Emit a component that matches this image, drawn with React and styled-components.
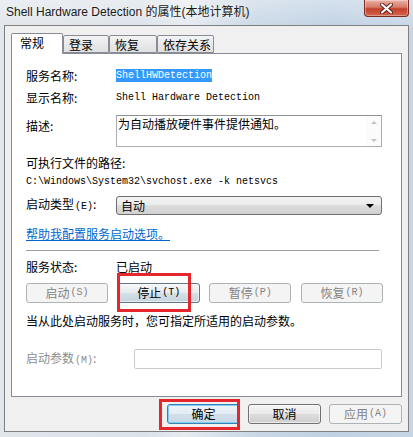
import React from 'react';
import styled, { createGlobalStyle } from 'styled-components';

const GlobalStyle = createGlobalStyle`
  html, body {
    margin: 0;
    padding: 0;
  }
  body {
    width: 413px;
    height: 437px;
    overflow: hidden;
    font-family: "Noto Sans CJK SC", sans-serif;
  }
`;

const Window = styled.div`
  width: 413px;
  height: 437px;
  display: flex;
  flex-direction: column;
  background:
    linear-gradient(180deg, rgba(255,255,255,0.35), rgba(255,255,255,0) 30px),
    linear-gradient(90deg, #e1e6eb 0%, #dbe2ea 35%, #e6ebf0 45%, #cbd8e6 60%, #bfd1e4 80%, #c7d6e6 100%);
`;

const TitleBar = styled.div`
  height: 25px;
  display: flex;
  align-items: flex-start;
  padding-left: 6px;
`;

const Title = styled.div`
  margin-top: 5px;
  font: 12px/15px "Liberation Sans", "Noto Sans CJK SC", sans-serif;
  color: #1a1a1a;
  text-shadow: 0 0 6px rgba(255,255,255,0.9);
`;

const CloseButton = styled.div`
  margin-left: auto;
  margin-right: 4px;
  width: 45px;
  height: 17px;
  box-sizing: border-box;
  border: 1px solid #7a2b22;
  border-top: none;
  border-radius: 0 0 4px 4px;
  background: linear-gradient(#eab2a6, #d77a68 45%, #c2412f 55%, #d4654a);
  box-shadow: inset 0 0 0 1px rgba(255,255,255,0.35);
  display: flex;
  align-items: center;
  justify-content: center;
`;

const Client = styled.div`
  margin: 0 4px;
  height: 407px;
  box-sizing: border-box;
  border: 1px solid #7f7f7f;
  background: #f0f0f0;
  padding: 7px 6px 0 6px;
  display: flex;
  flex-direction: column;
`;

const TabStrip = styled.div`
  height: 20px;
  display: flex;
  align-items: flex-end;
  position: relative;
  z-index: 1;
`;

const Tab = styled.div`
  width: ${p => p.$w}px;
  height: ${p => (p.$active ? 21 : 18)}px;
  margin-bottom: ${p => (p.$active ? -1 : 0)}px;
  box-sizing: border-box;
  border: 1px solid #898c95;
  border-bottom: ${p => (p.$active ? 'none' : '1px solid #898c95')};
  border-radius: 2px 2px 0 0;
  background: ${p => (p.$active ? '#ffffff' : 'linear-gradient(#f4f4f4, #e9e9e9 50%, #e0e0e0)')};
  padding: ${p => (p.$active ? '1px 0 0 8px' : '1px 0 0 5px')};
  font-size: 12px;
  line-height: 15px;
  color: #000;
`;

const Panel = styled.div`
  width: 391px;
  height: 344px;
  box-sizing: border-box;
  border: 1px solid #898c95;
  background: #ffffff;
  padding: 14px 18px 0 14px;
  display: flex;
  flex-direction: column;
`;

const Row = styled.div`
  display: flex;
  align-items: ${p => p.$align || 'center'};
  height: ${p => p.$h}px;
  margin-top: ${p => p.$mt || 0}px;
`;

const Label = styled.div`
  width: ${p => p.$w || 90}px;
  flex: none;
  font-size: 12px;
  line-height: 14px;
  color: ${p => (p.$disabled ? '#8d8d8d' : '#000')};
  padding-top: ${p => p.$pt || 0}px;
`;

const Text = styled.div`
  font-size: 12px;
  line-height: 14px;
  color: #000;
  white-space: nowrap;
`;

const Mono = styled.span`
  font-family: "Liberation Mono", "DejaVu Sans Mono", monospace;
  font-size: 10px;
  line-height: 13px;
  color: #000;
  white-space: pre;
`;

const Selected = styled(Mono)`
  background: #3399ff;
  color: #fff;
  display: inline-block;
`;

const TextArea = styled.div`
  width: 266px;
  height: 32px;
  box-sizing: border-box;
  border: 1px solid #abadb3;
  border-top-color: #8e9196;
  display: flex;
`;

const TextAreaBody = styled.div`
  flex: 1;
  font-size: 12px;
  line-height: 14px;
  padding: 1px 0 0 1px;
`;

const ScrollBar = styled.div`
  width: 15px;
  display: flex;
  flex-direction: column;
  justify-content: space-between;
  align-items: center;
  padding: 5px 0 4px;
  background: #fbfbfb;
`;

const Arrow = styled.div`
  width: 0;
  height: 0;
  border-left: 3px solid transparent;
  border-right: 3px solid transparent;
  ${p => (p.$up ? 'border-bottom: 3px solid #c2c2c2;' : 'border-top: 3px solid #c2c2c2;')}
`;

const Combo = styled.div`
  width: 266px;
  height: 19px;
  box-sizing: border-box;
  border: 1px solid #707070;
  border-radius: 3px;
  background: linear-gradient(#f3f3f3, #ebebeb 50%, #dddddd 50%, #d1d1d1);
  display: flex;
  align-items: center;
  padding: 0 4px;
  font-size: 12px;
  line-height: 14px;
`;

const ComboArrow = styled.div`
  margin-left: auto;
  margin-right: 3px;
  width: 0;
  height: 0;
  border-left: 4px solid transparent;
  border-right: 4px solid transparent;
  border-top: 4px solid #000;
`;

const Link = styled.a`
  font-size: 12px;
  line-height: 14px;
  color: #0066cc;
  text-decoration: underline;
`;

const Separator = styled.div`
  width: 353px;
  height: 1px;
  margin-top: 9px;
  background: #a0a0a0;
`;

const ButtonRow = styled.div`
  display: flex;
  justify-content: space-between;
  margin-top: ${p => p.$mt || 0}px;
`;

const ButtonWrap = styled.div`
  position: relative;
  flex: none;
`;

const Button = styled.div`
  width: ${p => p.$w || 82}px;
  height: 20px;
  box-sizing: border-box;
  border-radius: 3px;
  display: flex;
  align-items: center;
  justify-content: center;
  font-size: 12px;
  line-height: 14px;
  white-space: nowrap;
  border: 1px solid ${p => (p.$disabled ? '#adb2b5' : p.$default ? '#3c7fb1' : p.$hot ? '#5f7587' : '#707070')};
  color: ${p => (p.$disabled ? '#838383' : '#000')};
  background: ${p =>
    p.$disabled
      ? '#f4f4f4'
      : p.$default
      ? 'linear-gradient(#eef4f9, #e3ecf3 50%, #d3dfea 50%, #c8d8e6)'
      : p.$hot
      ? 'linear-gradient(#f5f6f7, #e8ecef 50%, #d6dfe7 50%, #c6d4df)'
      : 'linear-gradient(#f3f3f3, #ebebeb 50%, #dddddd 50%, #cfcfcf)'};
  box-shadow: ${p =>
    p.$default ? 'inset 0 0 0 1px #7cd0f4' : p.$disabled ? 'none' : 'inset 0 0 0 1px rgba(255,255,255,0.6)'};
`;

const Key = styled.span`
  font-family: "Liberation Mono", "DejaVu Sans Mono", monospace;
  font-size: 10px;
  margin-left: 1px;
`;

const RedBox = styled.div`
  position: absolute;
  left: ${p => p.$l}px;
  top: ${p => p.$t}px;
  width: ${p => p.$w}px;
  height: ${p => p.$h}px;
  box-sizing: border-box;
  border: 3px solid #e5262d;
  pointer-events: none;
`;

const Input = styled.div`
  width: 248px;
  height: 20px;
  box-sizing: border-box;
  border: 1px solid #c9cbcf;
  border-radius: 2px;
  background: #fff;
`;

const Footer = styled.div`
  display: flex;
  justify-content: flex-end;
  gap: 8px;
  margin-top: 7px;
`;

function CloseIcon() {
  return (
    <svg width="13" height="11" viewBox="0 0 13 11">
      <path d="M2 1.5 L11 9.5 M11 1.5 L2 9.5" stroke="#5b1d15" strokeWidth="4" strokeLinecap="round" />
      <path d="M2 1.5 L11 9.5 M11 1.5 L2 9.5" stroke="#ffffff" strokeWidth="2.2" strokeLinecap="round" />
    </svg>
  );
}

const tabs = [
  { label: '常规', w: 52, active: true },
  { label: '登录', w: 46 },
  { label: '恢复', w: 48 },
  { label: '依存关系', w: 57 },
];

export default function App() {
  return (
    <>
      <GlobalStyle />
      <Window>
        <TitleBar>
          <Title>Shell Hardware Detection 的属性(本地计算机)</Title>
          <CloseButton>
            <CloseIcon />
          </CloseButton>
        </TitleBar>
        <Client>
          <TabStrip>
            {tabs.map(t => (
              <Tab key={t.label} $w={t.w} $active={t.active}>
                {t.label}
              </Tab>
            ))}
          </TabStrip>
          <Panel>
            <Row $h={15}>
              <Label>服务名称:</Label>
              <Selected>ShellHWDetection</Selected>
            </Row>
            <Row $h={15} $mt={7}>
              <Label>显示名称:</Label>
              <Mono>Shell Hardware Detection</Mono>
            </Row>
            <Row $h={32} $mt={10} $align="flex-start">
              <Label $pt={4}>描述:</Label>
              <TextArea>
                <TextAreaBody>为自动播放硬件事件提供通知。</TextAreaBody>
                <ScrollBar>
                  <Arrow $up />
                  <Arrow />
                </ScrollBar>
              </TextArea>
            </Row>
            <Row $h={14} $mt={9}>
              <Text>可执行文件的路径:</Text>
            </Row>
            <Row $h={14} $mt={4}>
              <Mono>{'C:\\Windows\\System32\\svchost.exe -k netsvcs'}</Mono>
            </Row>
            <Row $h={19} $mt={8}>
              <Label>
                启动类型<Key>(E)</Key>:
              </Label>
              <Combo>
                自动
                <ComboArrow />
              </Combo>
            </Row>
            <Row $h={14} $mt={12}>
              <Link>帮助我配置服务启动选项。</Link>
            </Row>
            <Separator />
            <Row $h={14} $mt={9}>
              <Label>服务状态:</Label>
              <Text>已启动</Text>
            </Row>
            <ButtonRow $mt={9}>
              <ButtonWrap>
                <Button $disabled>
                  启动<Key>(S)</Key>
                </Button>
              </ButtonWrap>
              <ButtonWrap>
                <Button $hot>
                  停止<Key>(T)</Key>
                </Button>
                <RedBox $l={-1} $t={-10} $w={74} $h={39} />
              </ButtonWrap>
              <ButtonWrap>
                <Button $disabled>
                  暂停<Key>(P)</Key>
                </Button>
              </ButtonWrap>
              <ButtonWrap>
                <Button $disabled>
                  恢复<Key>(R)</Key>
                </Button>
              </ButtonWrap>
            </ButtonRow>
            <Row $h={14} $mt={11}>
              <Text>当从此处启动服务时，您可指定所适用的启动参数。</Text>
            </Row>
            <Row $h={20} $mt={21}>
              <Label $w={108} $disabled>
                启动参数<Key>(M)</Key>:
              </Label>
              <Input />
            </Row>
          </Panel>
          <Footer>
            <ButtonWrap>
              <Button $w={73} $default>
                确定
              </Button>
              <RedBox $l={-8} $t={-5} $w={81} $h={31} />
            </ButtonWrap>
            <ButtonWrap>
              <Button $w={73}>取消</Button>
            </ButtonWrap>
            <ButtonWrap>
              <Button $w={73} $disabled>
                应用<Key>(A)</Key>
              </Button>
            </ButtonWrap>
          </Footer>
        </Client>
      </Window>
    </>
  );
}
